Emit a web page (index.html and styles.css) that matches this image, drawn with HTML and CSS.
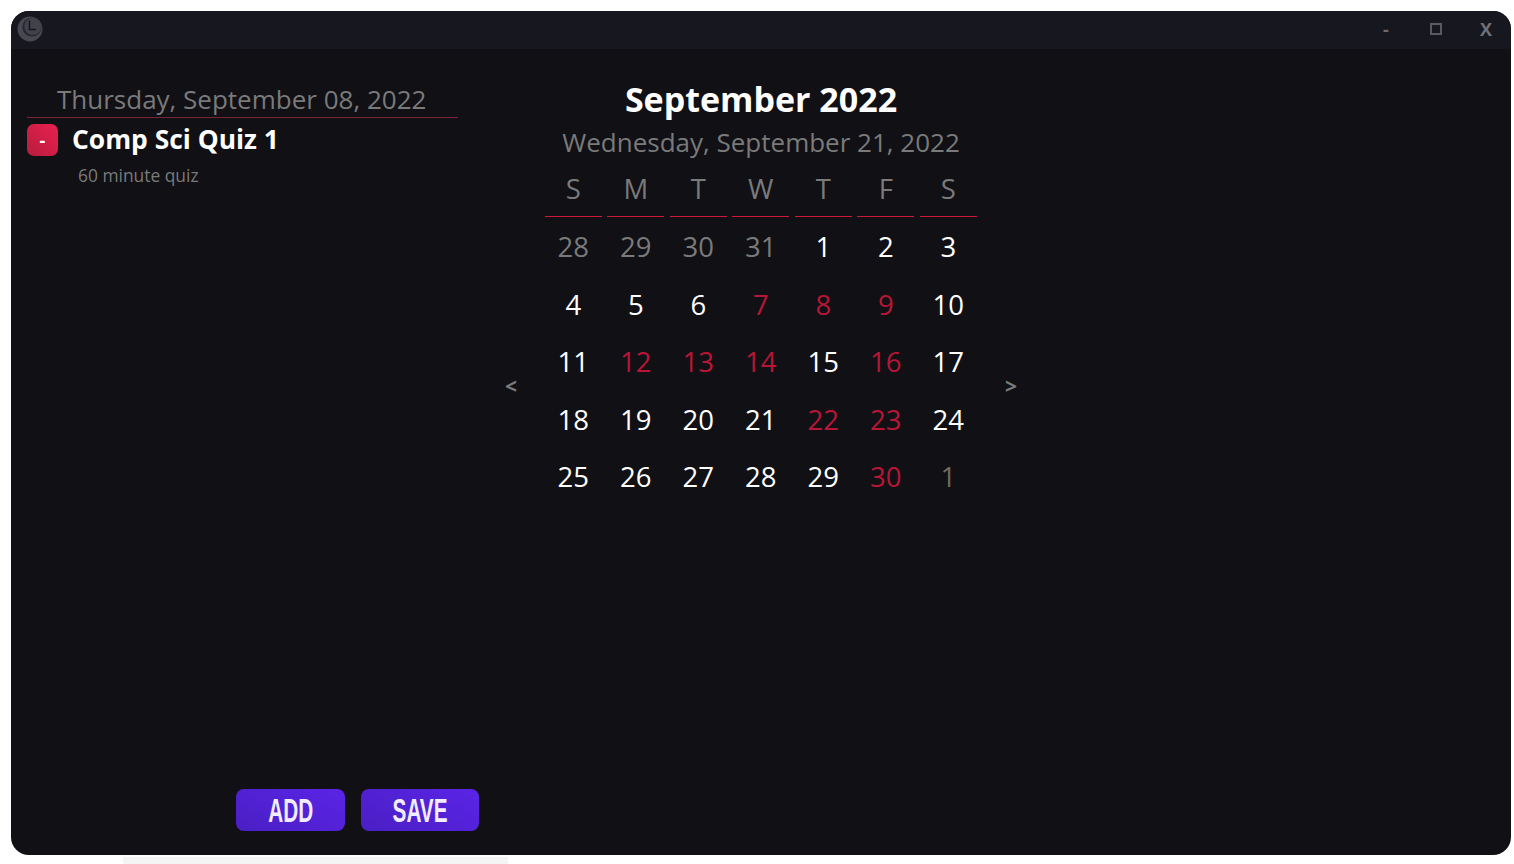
FILE: index.html
```html
<!DOCTYPE html>
<html lang="en">
<head>
    <meta charset="UTF-8">
    <meta name="viewport" content="width=device-width, initial-scale=1.0">
    <title>Calendar</title>
    <link rel="stylesheet" href="styles.css">
</head>
<body>
    <div class="window">
        <div class="titlebar">
            <svg class="logo" width="26" height="26" viewBox="0 0 26 26">
                <circle cx="13" cy="13" r="12.5" fill="#484853"/>
                <circle cx="15" cy="11" r="9.6" fill="#24252e"/>
                <circle cx="15.8" cy="10.4" r="8.6" fill="#42424d"/>
                <path d="M12.5 4.5V13.5H19" fill="none" stroke="#16171f" stroke-width="1.5"/>
            </svg>
            <div class="window-buttons">
                <span class="win-btn">-</span>
                <span class="win-btn"><span class="max-box"></span></span>
                <span class="win-btn win-close">X</span>
            </div>
        </div>
        <div class="content">
            <div class="events">
                <div class="events-date">Thursday, September 08, 2022</div>
                <div class="event">
                    <button class="remove-btn">-</button>
                    <span class="event-title">Comp Sci Quiz 1</span>
                </div>
                <div class="event-desc">60 minute quiz</div>
                <div class="actions">
                    <button class="action-btn btn-add"><span class="narrow">ADD</span></button>
                    <button class="action-btn btn-save"><span class="narrow">SAVE</span></button>
                </div>
            </div>
            <div class="calendar">
                <span class="arrow">&lt;</span>
                <div class="month">
                    <h1>September 2022</h1>
                    <div class="selected-date">Wednesday, September 21, 2022</div>
                    <div class="grid">
                        <div class="dow">S</div><div class="dow">M</div><div class="dow">T</div><div class="dow">W</div><div class="dow">T</div><div class="dow">F</div><div class="dow">S</div>
                        <div class="day muted">28</div><div class="day muted">29</div><div class="day muted">30</div><div class="day muted">31</div><div class="day">1</div><div class="day">2</div><div class="day">3</div>
                        <div class="day">4</div><div class="day">5</div><div class="day">6</div><div class="day busy">7</div><div class="day busy">8</div><div class="day busy">9</div><div class="day">10</div>
                        <div class="day">11</div><div class="day busy">12</div><div class="day busy">13</div><div class="day busy">14</div><div class="day">15</div><div class="day busy">16</div><div class="day">17</div>
                        <div class="day">18</div><div class="day">19</div><div class="day">20</div><div class="day">21</div><div class="day busy">22</div><div class="day busy">23</div><div class="day">24</div>
                        <div class="day">25</div><div class="day">26</div><div class="day">27</div><div class="day">28</div><div class="day">29</div><div class="day busy">30</div><div class="day next">1</div>
                    </div>
                </div>
                <span class="arrow">&gt;</span>
            </div>
        </div>
    </div>
    <div class="under-strip"></div>
</body>
</html>
```

FILE: styles.css
```css
/* Page behind the app window */
body {
    margin: 0;
    padding: 11px 3px 0 11px;
    height: 864px;
    box-sizing: border-box;
    overflow: hidden;
    background-color: #ffffff;
    font-family: "Open Sans", "Noto Sans", sans-serif;
}

.window {
    height: 844px;
    display: flex;
    flex-direction: column;
    background-color: #101015;
    border-radius: 18px;
    overflow: hidden;
}

.under-strip {
    width: 385px;
    height: 8px;
    margin: 2px 0 0 112px;
    background-color: #f4f4f4;
}

/* Title bar */
.titlebar {
    height: 38px;
    flex-shrink: 0;
    display: flex;
    align-items: center;
    justify-content: space-between;
    padding-left: 6px;
    background-color: #16171f;
}

.logo {
    margin-bottom: 2px;
}

.window-buttons {
    display: flex;
    padding-bottom: 3px;
}

.win-btn {
    width: 50px;
    display: flex;
    justify-content: center;
    align-items: center;
    color: #6a6a72;
    font-size: 18px;
    font-weight: 700;
}

.win-close {
    color: #707078;
}

.max-box {
    width: 8px;
    height: 8px;
    margin-right: 1px;
    border: 2px solid #5a5a62;
}

/* Left column */
.content {
    flex: 1;
    display: flex;
    min-height: 0;
}

.events {
    width: 452px;
    margin-left: 16px;
    padding-top: 32px;
    padding-bottom: 24px;
    display: flex;
    flex-direction: column;
}

.events-date {
    width: 431px;
    box-sizing: border-box;
    padding-left: 30px;
    border-bottom: 1px solid #7c2235;
    color: #7a7a7a;
    font-size: 26px;
    line-height: 36px;
}

.event {
    display: flex;
    align-items: center;
    margin-top: 6px;
}

.remove-btn {
    width: 31px;
    height: 32px;
    padding: 0;
    border: none;
    border-radius: 7px;
    background: linear-gradient(45deg, #b81c3e, #e8214f);
    color: #ffffff;
    font-family: inherit;
    font-size: 18px;
    font-weight: 700;
}

.event-title {
    margin-left: 14px;
    padding-bottom: 2px;
    color: #ffffff;
    font-size: 26.4px;
    font-weight: 700;
    line-height: 30px;
}

.event-desc {
    margin: 7px 0 0 51px;
    color: #7a7a7a;
    font-size: 17.4px;
}

.actions {
    margin-top: auto;
    display: flex;
    justify-content: flex-end;
    gap: 16px;
}

.action-btn {
    height: 42px;
    padding: 0;
    border: none;
    border-radius: 8px;
    background: linear-gradient(30deg, #4a1fc4, #5a24e6);
    color: #f1ecff;
    font-family: "Liberation Sans", sans-serif;
    font-size: 34px;
    font-weight: 700;
    line-height: 42px;
}

/* no condensed family installed, so squeeze the glyphs */
.narrow {
    display: inline-block;
    transform: scaleX(0.61);
}

.btn-add {
    width: 109px;
}

.btn-save {
    width: 118px;
}

/* Calendar */
.calendar {
    height: 624px;
    display: flex;
    align-items: center;
    align-self: flex-start;
    margin-left: 26px;
    margin-top: 27px;
}

.arrow {
    width: 12px;
    margin-top: -5px;
    color: #7a7a7a;
    font-size: 21px;
    font-weight: 700;
    text-align: center;
}

.month {
    width: 438px;
    margin: 0 25px;
    align-self: flex-start;
    text-align: center;
}

.month h1 {
    margin: 0;
    color: #ffffff;
    font-size: 34px;
    font-weight: 700;
    line-height: 46px;
}

.selected-date {
    color: #7a7a7a;
    font-size: 26px;
    line-height: 40px;
}

.grid {
    display: grid;
    grid-template-columns: repeat(7, 62.5px);
    justify-items: center;
}

.dow {
    width: 57px;
    height: 55px;
    box-sizing: border-box;
    border-bottom: 1px solid #d0183c;
    color: #7a7a7a;
    font-size: 27.5px;
    line-height: 53px;
}

.day {
    height: 57.5px;
    color: #ffffff;
    font-size: 27.5px;
    line-height: 59px;
}

.day.muted {
    color: #7a7a7a;
}

.day.busy {
    color: #b81636;
}

.day.next {
    color: #6f6a5c;
}
```
